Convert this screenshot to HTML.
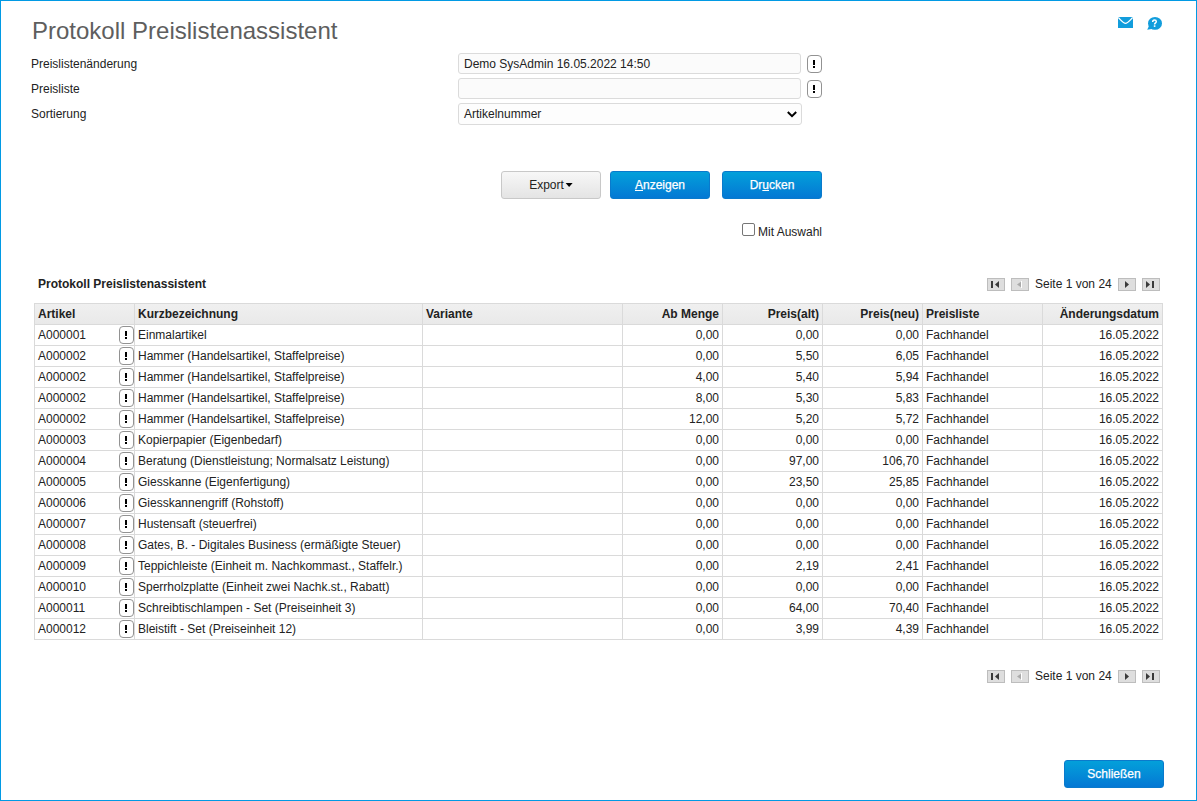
<!DOCTYPE html><html><head><meta charset="utf-8"><style>
*{box-sizing:border-box}
html,body{margin:0;padding:0;width:1197px;height:801px;overflow:hidden;background:#fff}
body{font-family:"Liberation Sans",sans-serif;font-size:12px;color:#222}
.frame{position:absolute;left:0;top:0;width:1197px;height:801px;border:1px solid #019ae4}
.a{position:absolute;white-space:nowrap}
.t{position:absolute;white-space:nowrap;line-height:20px;height:20px}
.title{font-size:24px;color:#5e5e5e;line-height:28px}
.inp{position:absolute;border:1px solid #dbdbdb;border-radius:3px;background:#fbfbfb}
.exc{position:absolute;width:15px;height:18px;border:1px solid #929292;border-radius:4px;background:#fff}
.exc i{position:absolute;left:5px;top:4px;width:2px;height:5px;background:#000}
.exc b{position:absolute;left:5px;top:10px;width:2px;height:2px;background:#000}
.btn{position:absolute;height:28px;border-radius:3px;text-align:center;line-height:26px;font-size:12px}
.gray{border:1px solid #c8c8c8;background:linear-gradient(#f7f7f7,#e4e4e4);color:#222}
.blue{border:1px solid #0a7acc;background:linear-gradient(#03a0da,#0478d4);color:#fff;-webkit-text-stroke:0.25px #fff}
.pg{position:absolute;width:18px;height:13px;border:1px solid #bdbdbd;background:#dedede}
.vl{position:absolute;width:1px;background:#dadada}
.hl{position:absolute;height:1px;background:#dadada}
</style></head><body><div class="frame"></div>
<div class="a title" style="left:32px;top:17px">Protokoll Preislistenassistent</div>
<svg class="a" style="left:1117px;top:16px" width="17" height="13" viewBox="0 0 17 13">
<rect x="1" y="1" width="15" height="11" fill="#129ddc"/>
<path d="M1.2 1.6 C4 4.2 6.5 7.4 8.5 7.4 C10.5 7.4 13 4.2 15.8 1.6" fill="none" stroke="#fff" stroke-width="1.3"/>
</svg>
<svg class="a" style="left:1146px;top:16px" width="18" height="16" viewBox="0 0 18 16">
<ellipse cx="9" cy="7.4" rx="7" ry="6.4" fill="#129ddc"/>
<path d="M1.2 13.8 L3.2 9.5 L7 12.8 Z" fill="#129ddc"/>
<path d="M6.7 6.1 C6.7 4.7 7.5 4.1 8.5 4.1 C9.6 4.1 10.3 4.8 10.3 5.7 C10.3 6.8 8.6 7 8.6 8.4" fill="none" stroke="#fff" stroke-width="1.5"/><rect x="7.8" y="9.3" width="1.6" height="1.6" fill="#fff"/>
</svg>
<div class="t" style="left:31px;top:54px">Preislistenänderung</div>
<div class="t" style="left:31px;top:79px">Preisliste</div>
<div class="t" style="left:31px;top:104px">Sortierung</div>
<div class="inp" style="left:458px;top:53px;width:343px;height:21px"></div>
<div class="t" style="left:464px;top:54px">Demo SysAdmin 16.05.2022 14:50</div>
<div class="inp" style="left:458px;top:78px;width:343px;height:21px"></div>
<div class="inp" style="left:458px;top:103px;width:344px;height:22px;background:#fdfdfd"></div>
<div class="t" style="left:464px;top:104px">Artikelnummer</div>
<svg class="a" style="left:786px;top:110px" width="12" height="9" viewBox="0 0 12 9"><path d="M1.8 2 L6 6.2 L10.2 2" fill="none" stroke="#000" stroke-width="2"/></svg>
<div class="exc" style="left:807px;top:55px"><i></i><b></b></div>
<div class="exc" style="left:807px;top:80px"><i></i><b></b></div>
<div class="btn gray" style="left:501px;top:171px;width:100px">Export<span style="display:inline-block;width:9px"></span><svg style="position:absolute;left:63px;top:11px" width="8" height="5" viewBox="0 0 8 5"><path d="M0.6 0 L7.6 0 L4.1 4 Z" fill="#000"/></svg></div>
<div class="btn blue" style="left:610px;top:171px;width:100px"><u>A</u>nzeigen</div>
<div class="btn blue" style="left:722px;top:171px;width:100px">Dr<u>u</u>cken</div>
<div class="a" style="left:742px;top:223px;width:13px;height:13px;border:1px solid #767676;border-radius:2px;background:#fff"></div>
<div class="t" style="left:758px;top:222px">Mit Auswahl</div>
<div class="t" style="left:38px;top:274px;font-weight:bold">Protokoll Preislistenassistent</div>
<div class="pg" style="left:987px;top:278px"><svg class="a" style="left:0;top:0" width="16" height="11" viewBox="0 0 16 11"><rect x="3" y="2" width="2" height="7" fill="#3a3a3a"/><path d="M11 2 L7 5.5 L11 9 Z" fill="#3a3a3a"/></svg></div><div class="pg" style="left:1011px;top:278px"><svg class="a" style="left:0;top:0" width="16" height="11" viewBox="0 0 16 11"><path d="M10 2 L5 5.5 L10 9 Z" fill="#aaa"/><rect x="9" y="2" width="1" height="7" fill="#fff"/></svg></div><div class="t" style="left:1035px;top:274px">Seite 1 von 24</div><div class="pg" style="left:1118px;top:278px"><svg class="a" style="left:0;top:0" width="16" height="11" viewBox="0 0 16 11"><path d="M6 2 L10 5.5 L6 9 Z" fill="#3a3a3a"/></svg></div><div class="pg" style="left:1142px;top:278px"><svg class="a" style="left:0;top:0" width="16" height="11" viewBox="0 0 16 11"><path d="M3 2 L7 5.5 L3 9 Z" fill="#3a3a3a"/><rect x="9" y="2" width="2" height="7" fill="#3a3a3a"/></svg></div>
<div class="pg" style="left:987px;top:670px"><svg class="a" style="left:0;top:0" width="16" height="11" viewBox="0 0 16 11"><rect x="3" y="2" width="2" height="7" fill="#3a3a3a"/><path d="M11 2 L7 5.5 L11 9 Z" fill="#3a3a3a"/></svg></div><div class="pg" style="left:1011px;top:670px"><svg class="a" style="left:0;top:0" width="16" height="11" viewBox="0 0 16 11"><path d="M10 2 L5 5.5 L10 9 Z" fill="#aaa"/><rect x="9" y="2" width="1" height="7" fill="#fff"/></svg></div><div class="t" style="left:1035px;top:666px">Seite 1 von 24</div><div class="pg" style="left:1118px;top:670px"><svg class="a" style="left:0;top:0" width="16" height="11" viewBox="0 0 16 11"><path d="M6 2 L10 5.5 L6 9 Z" fill="#3a3a3a"/></svg></div><div class="pg" style="left:1142px;top:670px"><svg class="a" style="left:0;top:0" width="16" height="11" viewBox="0 0 16 11"><path d="M3 2 L7 5.5 L3 9 Z" fill="#3a3a3a"/><rect x="9" y="2" width="2" height="7" fill="#3a3a3a"/></svg></div>
<div class="a" style="left:34px;top:303px;width:1129px;height:21px;background:linear-gradient(#f0f0f0,#e9e9e9)"></div>
<div class="vl" style="left:34px;top:303px;height:337px"></div>
<div class="vl" style="left:134px;top:303px;height:337px"></div>
<div class="vl" style="left:422px;top:303px;height:337px"></div>
<div class="vl" style="left:622px;top:303px;height:337px"></div>
<div class="vl" style="left:722px;top:303px;height:337px"></div>
<div class="vl" style="left:822px;top:303px;height:337px"></div>
<div class="vl" style="left:922px;top:303px;height:337px"></div>
<div class="vl" style="left:1042px;top:303px;height:337px"></div>
<div class="vl" style="left:1162px;top:303px;height:337px"></div>
<div class="hl" style="left:34px;top:303px;width:1129px"></div>
<div class="hl" style="left:34px;top:324px;width:1129px"></div>
<div class="hl" style="left:34px;top:345px;width:1129px"></div>
<div class="hl" style="left:34px;top:366px;width:1129px"></div>
<div class="hl" style="left:34px;top:387px;width:1129px"></div>
<div class="hl" style="left:34px;top:408px;width:1129px"></div>
<div class="hl" style="left:34px;top:429px;width:1129px"></div>
<div class="hl" style="left:34px;top:450px;width:1129px"></div>
<div class="hl" style="left:34px;top:471px;width:1129px"></div>
<div class="hl" style="left:34px;top:492px;width:1129px"></div>
<div class="hl" style="left:34px;top:513px;width:1129px"></div>
<div class="hl" style="left:34px;top:534px;width:1129px"></div>
<div class="hl" style="left:34px;top:555px;width:1129px"></div>
<div class="hl" style="left:34px;top:576px;width:1129px"></div>
<div class="hl" style="left:34px;top:597px;width:1129px"></div>
<div class="hl" style="left:34px;top:618px;width:1129px"></div>
<div class="hl" style="left:34px;top:639px;width:1129px"></div>
<div class="t" style="left:38px;top:304px;font-weight:bold;">Artikel</div>
<div class="t" style="left:138px;top:304px;font-weight:bold;">Kurzbezeichnung</div>
<div class="t" style="left:426px;top:304px;font-weight:bold;">Variante</div>
<div class="t" style="left:623px;width:96px;text-align:right;top:304px;font-weight:bold;">Ab Menge</div>
<div class="t" style="left:723px;width:96px;text-align:right;top:304px;font-weight:bold;">Preis(alt)</div>
<div class="t" style="left:823px;width:96px;text-align:right;top:304px;font-weight:bold;">Preis(neu)</div>
<div class="t" style="left:926px;top:304px;font-weight:bold;">Preisliste</div>
<div class="t" style="left:1043px;width:116px;text-align:right;top:304px;font-weight:bold;">Änderungsdatum</div>
<div class="t" style="left:38px;top:325px;">A000001</div>
<div class="t" style="left:138px;top:325px;">Einmalartikel</div>
<div class="t" style="left:623px;width:96px;text-align:right;top:325px;">0,00</div>
<div class="t" style="left:723px;width:96px;text-align:right;top:325px;">0,00</div>
<div class="t" style="left:823px;width:96px;text-align:right;top:325px;">0,00</div>
<div class="t" style="left:926px;top:325px;">Fachhandel</div>
<div class="t" style="left:1043px;width:116px;text-align:right;top:325px;">16.05.2022</div>
<div class="exc" style="left:119px;top:326px"><i></i><b></b></div>
<div class="t" style="left:38px;top:346px;">A000002</div>
<div class="t" style="left:138px;top:346px;">Hammer (Handelsartikel, Staffelpreise)</div>
<div class="t" style="left:623px;width:96px;text-align:right;top:346px;">0,00</div>
<div class="t" style="left:723px;width:96px;text-align:right;top:346px;">5,50</div>
<div class="t" style="left:823px;width:96px;text-align:right;top:346px;">6,05</div>
<div class="t" style="left:926px;top:346px;">Fachhandel</div>
<div class="t" style="left:1043px;width:116px;text-align:right;top:346px;">16.05.2022</div>
<div class="exc" style="left:119px;top:347px"><i></i><b></b></div>
<div class="t" style="left:38px;top:367px;">A000002</div>
<div class="t" style="left:138px;top:367px;">Hammer (Handelsartikel, Staffelpreise)</div>
<div class="t" style="left:623px;width:96px;text-align:right;top:367px;">4,00</div>
<div class="t" style="left:723px;width:96px;text-align:right;top:367px;">5,40</div>
<div class="t" style="left:823px;width:96px;text-align:right;top:367px;">5,94</div>
<div class="t" style="left:926px;top:367px;">Fachhandel</div>
<div class="t" style="left:1043px;width:116px;text-align:right;top:367px;">16.05.2022</div>
<div class="exc" style="left:119px;top:368px"><i></i><b></b></div>
<div class="t" style="left:38px;top:388px;">A000002</div>
<div class="t" style="left:138px;top:388px;">Hammer (Handelsartikel, Staffelpreise)</div>
<div class="t" style="left:623px;width:96px;text-align:right;top:388px;">8,00</div>
<div class="t" style="left:723px;width:96px;text-align:right;top:388px;">5,30</div>
<div class="t" style="left:823px;width:96px;text-align:right;top:388px;">5,83</div>
<div class="t" style="left:926px;top:388px;">Fachhandel</div>
<div class="t" style="left:1043px;width:116px;text-align:right;top:388px;">16.05.2022</div>
<div class="exc" style="left:119px;top:389px"><i></i><b></b></div>
<div class="t" style="left:38px;top:409px;">A000002</div>
<div class="t" style="left:138px;top:409px;">Hammer (Handelsartikel, Staffelpreise)</div>
<div class="t" style="left:623px;width:96px;text-align:right;top:409px;">12,00</div>
<div class="t" style="left:723px;width:96px;text-align:right;top:409px;">5,20</div>
<div class="t" style="left:823px;width:96px;text-align:right;top:409px;">5,72</div>
<div class="t" style="left:926px;top:409px;">Fachhandel</div>
<div class="t" style="left:1043px;width:116px;text-align:right;top:409px;">16.05.2022</div>
<div class="exc" style="left:119px;top:410px"><i></i><b></b></div>
<div class="t" style="left:38px;top:430px;">A000003</div>
<div class="t" style="left:138px;top:430px;">Kopierpapier (Eigenbedarf)</div>
<div class="t" style="left:623px;width:96px;text-align:right;top:430px;">0,00</div>
<div class="t" style="left:723px;width:96px;text-align:right;top:430px;">0,00</div>
<div class="t" style="left:823px;width:96px;text-align:right;top:430px;">0,00</div>
<div class="t" style="left:926px;top:430px;">Fachhandel</div>
<div class="t" style="left:1043px;width:116px;text-align:right;top:430px;">16.05.2022</div>
<div class="exc" style="left:119px;top:431px"><i></i><b></b></div>
<div class="t" style="left:38px;top:451px;">A000004</div>
<div class="t" style="left:138px;top:451px;">Beratung (Dienstleistung; Normalsatz Leistung)</div>
<div class="t" style="left:623px;width:96px;text-align:right;top:451px;">0,00</div>
<div class="t" style="left:723px;width:96px;text-align:right;top:451px;">97,00</div>
<div class="t" style="left:823px;width:96px;text-align:right;top:451px;">106,70</div>
<div class="t" style="left:926px;top:451px;">Fachhandel</div>
<div class="t" style="left:1043px;width:116px;text-align:right;top:451px;">16.05.2022</div>
<div class="exc" style="left:119px;top:452px"><i></i><b></b></div>
<div class="t" style="left:38px;top:472px;">A000005</div>
<div class="t" style="left:138px;top:472px;">Giesskanne (Eigenfertigung)</div>
<div class="t" style="left:623px;width:96px;text-align:right;top:472px;">0,00</div>
<div class="t" style="left:723px;width:96px;text-align:right;top:472px;">23,50</div>
<div class="t" style="left:823px;width:96px;text-align:right;top:472px;">25,85</div>
<div class="t" style="left:926px;top:472px;">Fachhandel</div>
<div class="t" style="left:1043px;width:116px;text-align:right;top:472px;">16.05.2022</div>
<div class="exc" style="left:119px;top:473px"><i></i><b></b></div>
<div class="t" style="left:38px;top:493px;">A000006</div>
<div class="t" style="left:138px;top:493px;">Giesskannengriff (Rohstoff)</div>
<div class="t" style="left:623px;width:96px;text-align:right;top:493px;">0,00</div>
<div class="t" style="left:723px;width:96px;text-align:right;top:493px;">0,00</div>
<div class="t" style="left:823px;width:96px;text-align:right;top:493px;">0,00</div>
<div class="t" style="left:926px;top:493px;">Fachhandel</div>
<div class="t" style="left:1043px;width:116px;text-align:right;top:493px;">16.05.2022</div>
<div class="exc" style="left:119px;top:494px"><i></i><b></b></div>
<div class="t" style="left:38px;top:514px;">A000007</div>
<div class="t" style="left:138px;top:514px;">Hustensaft (steuerfrei)</div>
<div class="t" style="left:623px;width:96px;text-align:right;top:514px;">0,00</div>
<div class="t" style="left:723px;width:96px;text-align:right;top:514px;">0,00</div>
<div class="t" style="left:823px;width:96px;text-align:right;top:514px;">0,00</div>
<div class="t" style="left:926px;top:514px;">Fachhandel</div>
<div class="t" style="left:1043px;width:116px;text-align:right;top:514px;">16.05.2022</div>
<div class="exc" style="left:119px;top:515px"><i></i><b></b></div>
<div class="t" style="left:38px;top:535px;">A000008</div>
<div class="t" style="left:138px;top:535px;">Gates, B. - Digitales Business (ermäßigte Steuer)</div>
<div class="t" style="left:623px;width:96px;text-align:right;top:535px;">0,00</div>
<div class="t" style="left:723px;width:96px;text-align:right;top:535px;">0,00</div>
<div class="t" style="left:823px;width:96px;text-align:right;top:535px;">0,00</div>
<div class="t" style="left:926px;top:535px;">Fachhandel</div>
<div class="t" style="left:1043px;width:116px;text-align:right;top:535px;">16.05.2022</div>
<div class="exc" style="left:119px;top:536px"><i></i><b></b></div>
<div class="t" style="left:38px;top:556px;">A000009</div>
<div class="t" style="left:138px;top:556px;">Teppichleiste (Einheit m. Nachkommast., Staffelr.)</div>
<div class="t" style="left:623px;width:96px;text-align:right;top:556px;">0,00</div>
<div class="t" style="left:723px;width:96px;text-align:right;top:556px;">2,19</div>
<div class="t" style="left:823px;width:96px;text-align:right;top:556px;">2,41</div>
<div class="t" style="left:926px;top:556px;">Fachhandel</div>
<div class="t" style="left:1043px;width:116px;text-align:right;top:556px;">16.05.2022</div>
<div class="exc" style="left:119px;top:557px"><i></i><b></b></div>
<div class="t" style="left:38px;top:577px;">A000010</div>
<div class="t" style="left:138px;top:577px;">Sperrholzplatte (Einheit zwei Nachk.st., Rabatt)</div>
<div class="t" style="left:623px;width:96px;text-align:right;top:577px;">0,00</div>
<div class="t" style="left:723px;width:96px;text-align:right;top:577px;">0,00</div>
<div class="t" style="left:823px;width:96px;text-align:right;top:577px;">0,00</div>
<div class="t" style="left:926px;top:577px;">Fachhandel</div>
<div class="t" style="left:1043px;width:116px;text-align:right;top:577px;">16.05.2022</div>
<div class="exc" style="left:119px;top:578px"><i></i><b></b></div>
<div class="t" style="left:38px;top:598px;">A000011</div>
<div class="t" style="left:138px;top:598px;">Schreibtischlampen - Set (Preiseinheit 3)</div>
<div class="t" style="left:623px;width:96px;text-align:right;top:598px;">0,00</div>
<div class="t" style="left:723px;width:96px;text-align:right;top:598px;">64,00</div>
<div class="t" style="left:823px;width:96px;text-align:right;top:598px;">70,40</div>
<div class="t" style="left:926px;top:598px;">Fachhandel</div>
<div class="t" style="left:1043px;width:116px;text-align:right;top:598px;">16.05.2022</div>
<div class="exc" style="left:119px;top:599px"><i></i><b></b></div>
<div class="t" style="left:38px;top:619px;">A000012</div>
<div class="t" style="left:138px;top:619px;">Bleistift - Set (Preiseinheit 12)</div>
<div class="t" style="left:623px;width:96px;text-align:right;top:619px;">0,00</div>
<div class="t" style="left:723px;width:96px;text-align:right;top:619px;">3,99</div>
<div class="t" style="left:823px;width:96px;text-align:right;top:619px;">4,39</div>
<div class="t" style="left:926px;top:619px;">Fachhandel</div>
<div class="t" style="left:1043px;width:116px;text-align:right;top:619px;">16.05.2022</div>
<div class="exc" style="left:119px;top:620px"><i></i><b></b></div>
<div class="btn blue" style="left:1064px;top:760px;width:100px">Schließen</div>
</body></html>
